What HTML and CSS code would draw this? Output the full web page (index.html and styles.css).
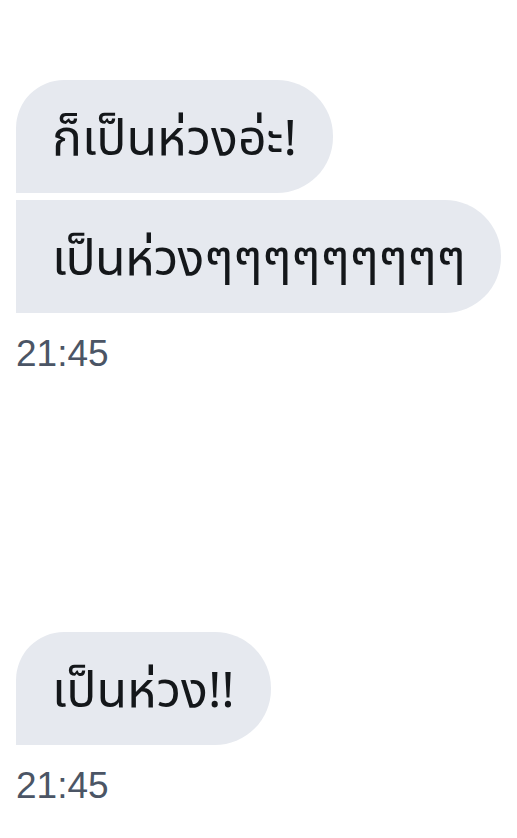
FILE: index.html
```html
<!DOCTYPE html>
<html lang="th">
<head>
<meta charset="utf-8">
<link rel="stylesheet" href="styles.css">
</head>
<body>
<div class="chat">
  <div class="group">
    <div class="bubble">ก็เป็นห่วงอ่ะ!</div>
    <div class="bubble bottom">เป็นห่วงๆๆๆๆๆๆๆๆๆ</div>
    <div class="time">21:45</div>
  </div>
  <div class="group second">
    <div class="bubble">เป็นห่วง!!</div>
    <div class="time">21:45</div>
  </div>
</div>
</body>
</html>
```
FILE: styles.css
```css
html, body {
  margin: 0;
  padding: 0;
  background: #ffffff;
}
body {
  font-family: "Noto Sans", "Noto Sans Thai", "Liberation Sans", sans-serif;
  width: 517px;
  height: 838px;
  overflow: hidden;
}
.chat {
  display: flex;
  flex-direction: column;
  padding: 80px 0 0 16px;
}
.group {
  display: flex;
  flex-direction: column;
  align-items: flex-start;
  gap: 7px;
}
.second {
  margin-top: 257px;
}
.bubble {
  background: #e6e9ef;
  color: #14171a;
  font-size: 50px;
  line-height: 113px;
  height: 113px;
  padding: 0 36px;
  box-sizing: border-box;
  white-space: nowrap;
  border-radius: 48px 56px 56px 0;
}
.bottom {
  border-radius: 0 56px 56px 0;
  letter-spacing: -0.7px;
}
.time {
  margin-top: 13px;
  font-family: "Liberation Sans", Arial, sans-serif;
  font-size: 37px;
  line-height: 42px;
  color: #4b5565;
}
```
